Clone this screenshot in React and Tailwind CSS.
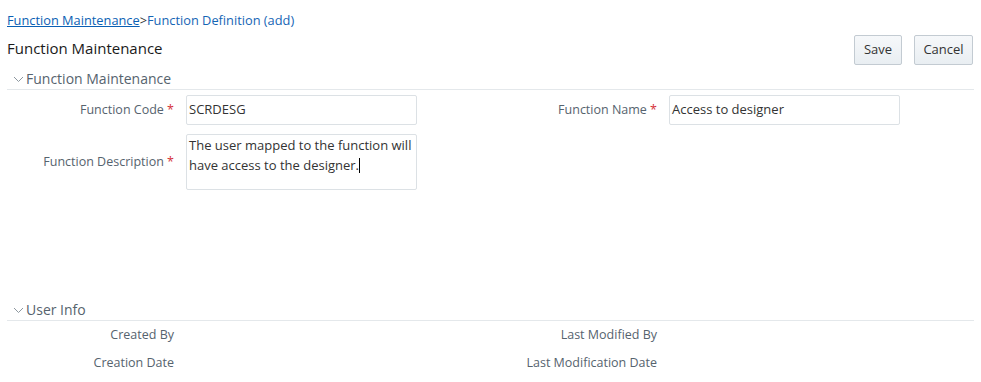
import React from 'react';

const Chevron = () => (
    <svg width="11" height="7" viewBox="0 0 11 7" className="mr-[2px] mt-[2px] shrink-0">
        <path d="M1 1 L5.5 5.5 L10 1" fill="none" stroke="#8d979f" strokeWidth="1" />
    </svg>
);

const SectionHeader = ({ title }) => (
    <div className="mx-[7px] flex h-[22px] items-center border-b border-[#e4e8eb] pl-[6px] text-[14px] leading-[20px] text-[#56636e]">
        <Chevron />
        <span>{title}</span>
    </div>
);

const Label = ({ text, required }) => (
    <div className="w-[167px] shrink-0 text-right text-[12.5px] text-[#56636e]">
        {text}
        {required && <span className="text-[#d5313a]"> *</span>}
    </div>
);

const App = () => {
    return (
        <div className="h-[382px] w-[981px] overflow-hidden bg-white font-['Open_Sans',sans-serif] text-[#333]">
            {/* breadcrumb */}
            <div className="px-[7px] pt-[11px] text-[12.8px] leading-[18px]">
                <a href="#" className="text-[#0a5fb4] underline">Function Maintenance</a>
                <span className="text-[#333]">&gt;</span>
                <span className="text-[#1565b5]">Function Definition (add)</span>
            </div>

            {/* title + actions */}
            <div className="mt-[6px] flex h-[30px] items-center justify-between pl-[7px] pr-[8px]">
                <h1 className="-mt-[4px] text-[15px] leading-[20px] text-[#1a1a1a]">Function Maintenance</h1>
                <div className="flex gap-[12px]">
                    <button className="h-[30px] w-[48px] rounded-[2px] border border-[#c3cbd2] bg-gradient-to-b from-[#f6f8fa] to-[#e9eef2] text-[13px] text-[#333]">Save</button>
                    <button className="h-[30px] w-[59px] rounded-[2px] border border-[#c3cbd2] bg-gradient-to-b from-[#f6f8fa] to-[#e9eef2] text-[13px] text-[#333]">Cancel</button>
                </div>
            </div>

            <div className="mt-[3px]">
                <SectionHeader title="Function Maintenance" />
            </div>

            {/* form */}
            <div className="mt-[5px] flex px-[7px]">
                <div className="w-[483px]">
                    <div className="flex items-center gap-[12px]">
                        <Label text="Function Code" required />
                        <div className="flex h-[30px] w-[231px] items-center rounded-[2px] border border-[#dce1e5] px-[2px] text-[13px]">SCRDESG</div>
                    </div>
                    <div className="mt-[9px] flex items-center gap-[12px]">
                        <Label text="Function Description" required />
                        <div className="h-[56px] w-[231px] rounded-[2px] border border-[#dce1e5] px-[2px] pt-[1px] text-[13px] leading-[19px]">
                            The user mapped to the function will have access to the designer.<span className="inline-block h-[15px] w-[1px] translate-y-[3px] bg-black"></span>
                        </div>
                    </div>
                </div>
                <div className="w-[483px]">
                    <div className="flex items-center gap-[12px]">
                        <Label text="Function Name" required />
                        <div className="flex h-[30px] w-[231px] items-center rounded-[2px] border border-[#dce1e5] px-[2px] text-[13px]">Access to designer</div>
                    </div>
                </div>
            </div>

            <div className="mt-[109px]">
                <SectionHeader title="User Info" />
            </div>

            <div className="mt-[4px] flex px-[7px] leading-[20px]">
                <div className="w-[483px] space-y-[8px]">
                    <Label text="Created By" />
                    <Label text="Creation Date" />
                </div>
                <div className="w-[483px] space-y-[8px]">
                    <Label text="Last Modified By" />
                    <Label text="Last Modification Date" />
                </div>
            </div>
        </div>
    );
};

export default App;
